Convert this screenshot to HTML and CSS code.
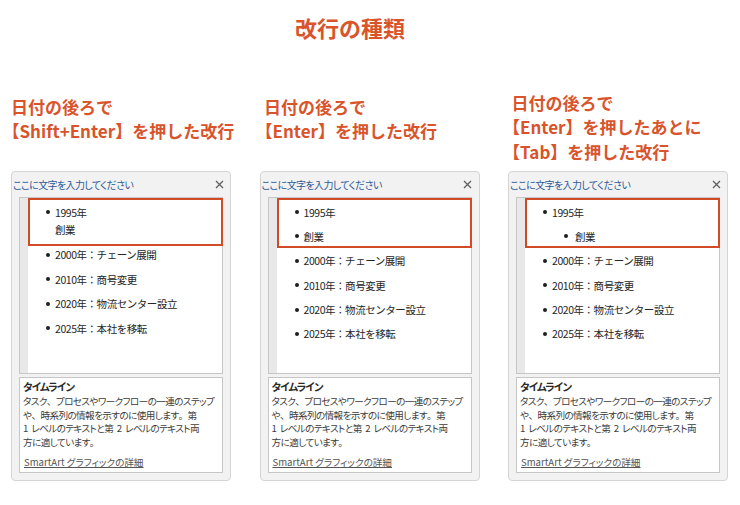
FILE: index.html
```html
<!DOCTYPE html>
<html lang="ja">
<head>
<meta charset="utf-8">
<title>改行の種類</title>
<link rel="stylesheet" href="styles.css">
</head>
<body>
<div class="page">
  <h1 class="title">改行の種類</h1>
  <div class="columns">
    <section class="col">
      <div class="heading heading-a"><span class="hl">日付の後ろで</span><span class="hl">【Shift+Enter】を押した改行</span></div>
      <div class="pane">
        <div class="pane-head">
          <span class="pane-title">ここに文字を入力してください</span>
          <svg class="close" width="9" height="9" viewBox="0 0 9 9"><path d="M1 1L8 8M8 1L1 8" stroke="#5f5f5f" stroke-width="1.3" fill="none"/></svg>
        </div>
        <div class="textpane">
          <div class="strip"></div>
          <div class="list">
            <div class="mark mark-short"></div>
            <div class="item item-gap">1995年<br>創業</div>
            <div class="item">2000年：チェーン展開</div>
            <div class="item">2010年：商号変更</div>
            <div class="item">2020年：物流センター設立</div>
            <div class="item">2025年：本社を移転</div>
          </div>
        </div>
        <div class="desc">
          <div class="desc-title">タイムライン</div>
          <p class="desc-text">タスク<span class="fw">、</span>プロセスやワークフローの一連のステップ<br>や<span class="fw">、</span>時系列の情報を示すのに使用します<span class="fw">。</span>第<br>1 レベルのテキストと第 2 レベルのテキスト両<br>方に適しています<span class="fw">。</span></p>
          <div class="desc-link">SmartArt グラフィックの詳細</div>
        </div>
      </div>
    </section>
    <section class="col">
      <div class="heading heading-b"><span class="hl">日付の後ろで</span><span class="hl">【Enter】を押した改行</span></div>
      <div class="pane">
        <div class="pane-head">
          <span class="pane-title">ここに文字を入力してください</span>
          <svg class="close" width="9" height="9" viewBox="0 0 9 9"><path d="M1 1L8 8M8 1L1 8" stroke="#5f5f5f" stroke-width="1.3" fill="none"/></svg>
        </div>
        <div class="textpane">
          <div class="strip"></div>
          <div class="list">
            <div class="mark"></div>
            <div class="item">1995年</div>
            <div class="item">創業</div>
            <div class="item">2000年：チェーン展開</div>
            <div class="item">2010年：商号変更</div>
            <div class="item">2020年：物流センター設立</div>
            <div class="item">2025年：本社を移転</div>
          </div>
        </div>
        <div class="desc">
          <div class="desc-title">タイムライン</div>
          <p class="desc-text">タスク<span class="fw">、</span>プロセスやワークフローの一連のステップ<br>や<span class="fw">、</span>時系列の情報を示すのに使用します<span class="fw">。</span>第<br>1 レベルのテキストと第 2 レベルのテキスト両<br>方に適しています<span class="fw">。</span></p>
          <div class="desc-link">SmartArt グラフィックの詳細</div>
        </div>
      </div>
    </section>
    <section class="col">
      <div class="heading heading-c"><span class="hl">日付の後ろで</span><span class="hl">【Enter】を押したあとに</span><span class="hl">【Tab】を押した改行</span></div>
      <div class="pane">
        <div class="pane-head">
          <span class="pane-title">ここに文字を入力してください</span>
          <svg class="close" width="9" height="9" viewBox="0 0 9 9"><path d="M1 1L8 8M8 1L1 8" stroke="#5f5f5f" stroke-width="1.3" fill="none"/></svg>
        </div>
        <div class="textpane">
          <div class="strip"></div>
          <div class="list">
            <div class="mark"></div>
            <div class="item">1995年</div>
            <div class="item item-l2">創業</div>
            <div class="item">2000年：チェーン展開</div>
            <div class="item">2010年：商号変更</div>
            <div class="item">2020年：物流センター設立</div>
            <div class="item">2025年：本社を移転</div>
          </div>
        </div>
        <div class="desc">
          <div class="desc-title">タイムライン</div>
          <p class="desc-text">タスク<span class="fw">、</span>プロセスやワークフローの一連のステップ<br>や<span class="fw">、</span>時系列の情報を示すのに使用します<span class="fw">。</span>第<br>1 レベルのテキストと第 2 レベルのテキスト両<br>方に適しています<span class="fw">。</span></p>
          <div class="desc-link">SmartArt グラフィックの詳細</div>
        </div>
      </div>
    </section>
  </div>
</div>
</body>
</html>
```
FILE: styles.css
```css
* { box-sizing: border-box; }

html, body {
  margin: 0;
  padding: 0;
  background: #ffffff;
}

body {
  font-family: "Noto Sans CJK JP", "Noto Sans", sans-serif;
  color: #333333;
}

.page {
  width: 740px;
  height: 505px;
}

.title {
  margin: 0;
  padding: 14px 40px 0 0;
  height: 40px;
  text-align: center;
  font-size: 22px;
  line-height: 26px;
  font-weight: 700;
  color: #d9542b;
}

.columns {
  display: flex;
  gap: 28.5px;
  padding-left: 11px;
}

.col {
  width: 220px;
  display: flex;
  flex-direction: column;
}

.heading {
  height: 131px;
  display: flex;
  flex-direction: column;
  font-size: 17px;
  line-height: 24.5px;
  font-weight: 700;
  color: #d9542b;
  text-spacing-trim: trim-start;
  white-space: nowrap;
}

.heading-a { padding: 54.75px 0 0 0; }
.heading-b { padding: 54.75px 0 0 4.5px; }
.heading-c { padding: 50.75px 0 0 3.5px; }

.pane {
  height: 310px;
  border: 1px solid #d5d5d5;
  border-radius: 4px;
  background: #f2f2f2;
  padding: 0 7px 7px 7px;
  display: flex;
  flex-direction: column;
}

.pane-head {
  height: 25px;
  margin: 0 -7px;
  display: flex;
  align-items: center;
  justify-content: space-between;
  padding: 0 6.5px 0 1px;
}

.pane-title {
  font-size: 10px;
  line-height: 12px;
  letter-spacing: -0.6px;
  color: #2e5c9a;
  font-feature-settings: "palt";
  white-space: nowrap;
}

.close { display: block; }

.textpane {
  height: 177px;
  border: 1px solid #c6c6c6;
  background: #ffffff;
  display: flex;
}

.strip {
  width: 8px;
  background: #e8e8e8;
}

.list {
  flex: 1;
  position: relative;
  padding-top: 5.5px;
  font-size: 10.5px;
  line-height: 17px;
  letter-spacing: -0.45px;
  color: #262626;
}

.mark {
  position: absolute;
  left: 0;
  right: -1px;
  top: 0;
  height: 50px;
  border: 2px solid #d14b27;
}

.mark-short { height: 48px; }

.item {
  position: relative;
  padding-left: 27px;
  white-space: nowrap;
}

.item + .item { margin-top: 7.4px; }

.item-gap { padding-bottom: 1.5px; }

.item::before {
  content: "";
  position: absolute;
  left: 18px;
  top: 6.5px;
  width: 4px;
  height: 4px;
  border-radius: 50%;
  background: #1e1e1e;
}

.item-l2 { padding-left: 50px; }
.item-l2::before { left: 39px; }

.desc {
  margin-top: 3px;
  height: 96px;
  border: 1px solid #c6c6c6;
  background: #ffffff;
  padding: 2px 3px 3px 3px;
}

.desc-title {
  font-size: 10.5px;
  line-height: 14px;
  font-weight: 700;
  letter-spacing: -0.9px;
  color: #2a2a2a;
  font-feature-settings: "palt";
}

.desc-text {
  margin: 1px 0 0 0;
  font-size: 9.6px;
  line-height: 13.7px;
  letter-spacing: -0.6px;
  word-spacing: 2px;
  color: #3c3c3c;
  font-feature-settings: "palt";
  white-space: nowrap;
}

.fw { font-feature-settings: normal; }

.desc-link {
  margin-top: 5px;
  padding-left: 1px;
  font-size: 9.6px;
  line-height: 14px;
  letter-spacing: 0;
  color: #555555;
  text-decoration: underline;
  font-feature-settings: "palt";
  white-space: nowrap;
}
```
